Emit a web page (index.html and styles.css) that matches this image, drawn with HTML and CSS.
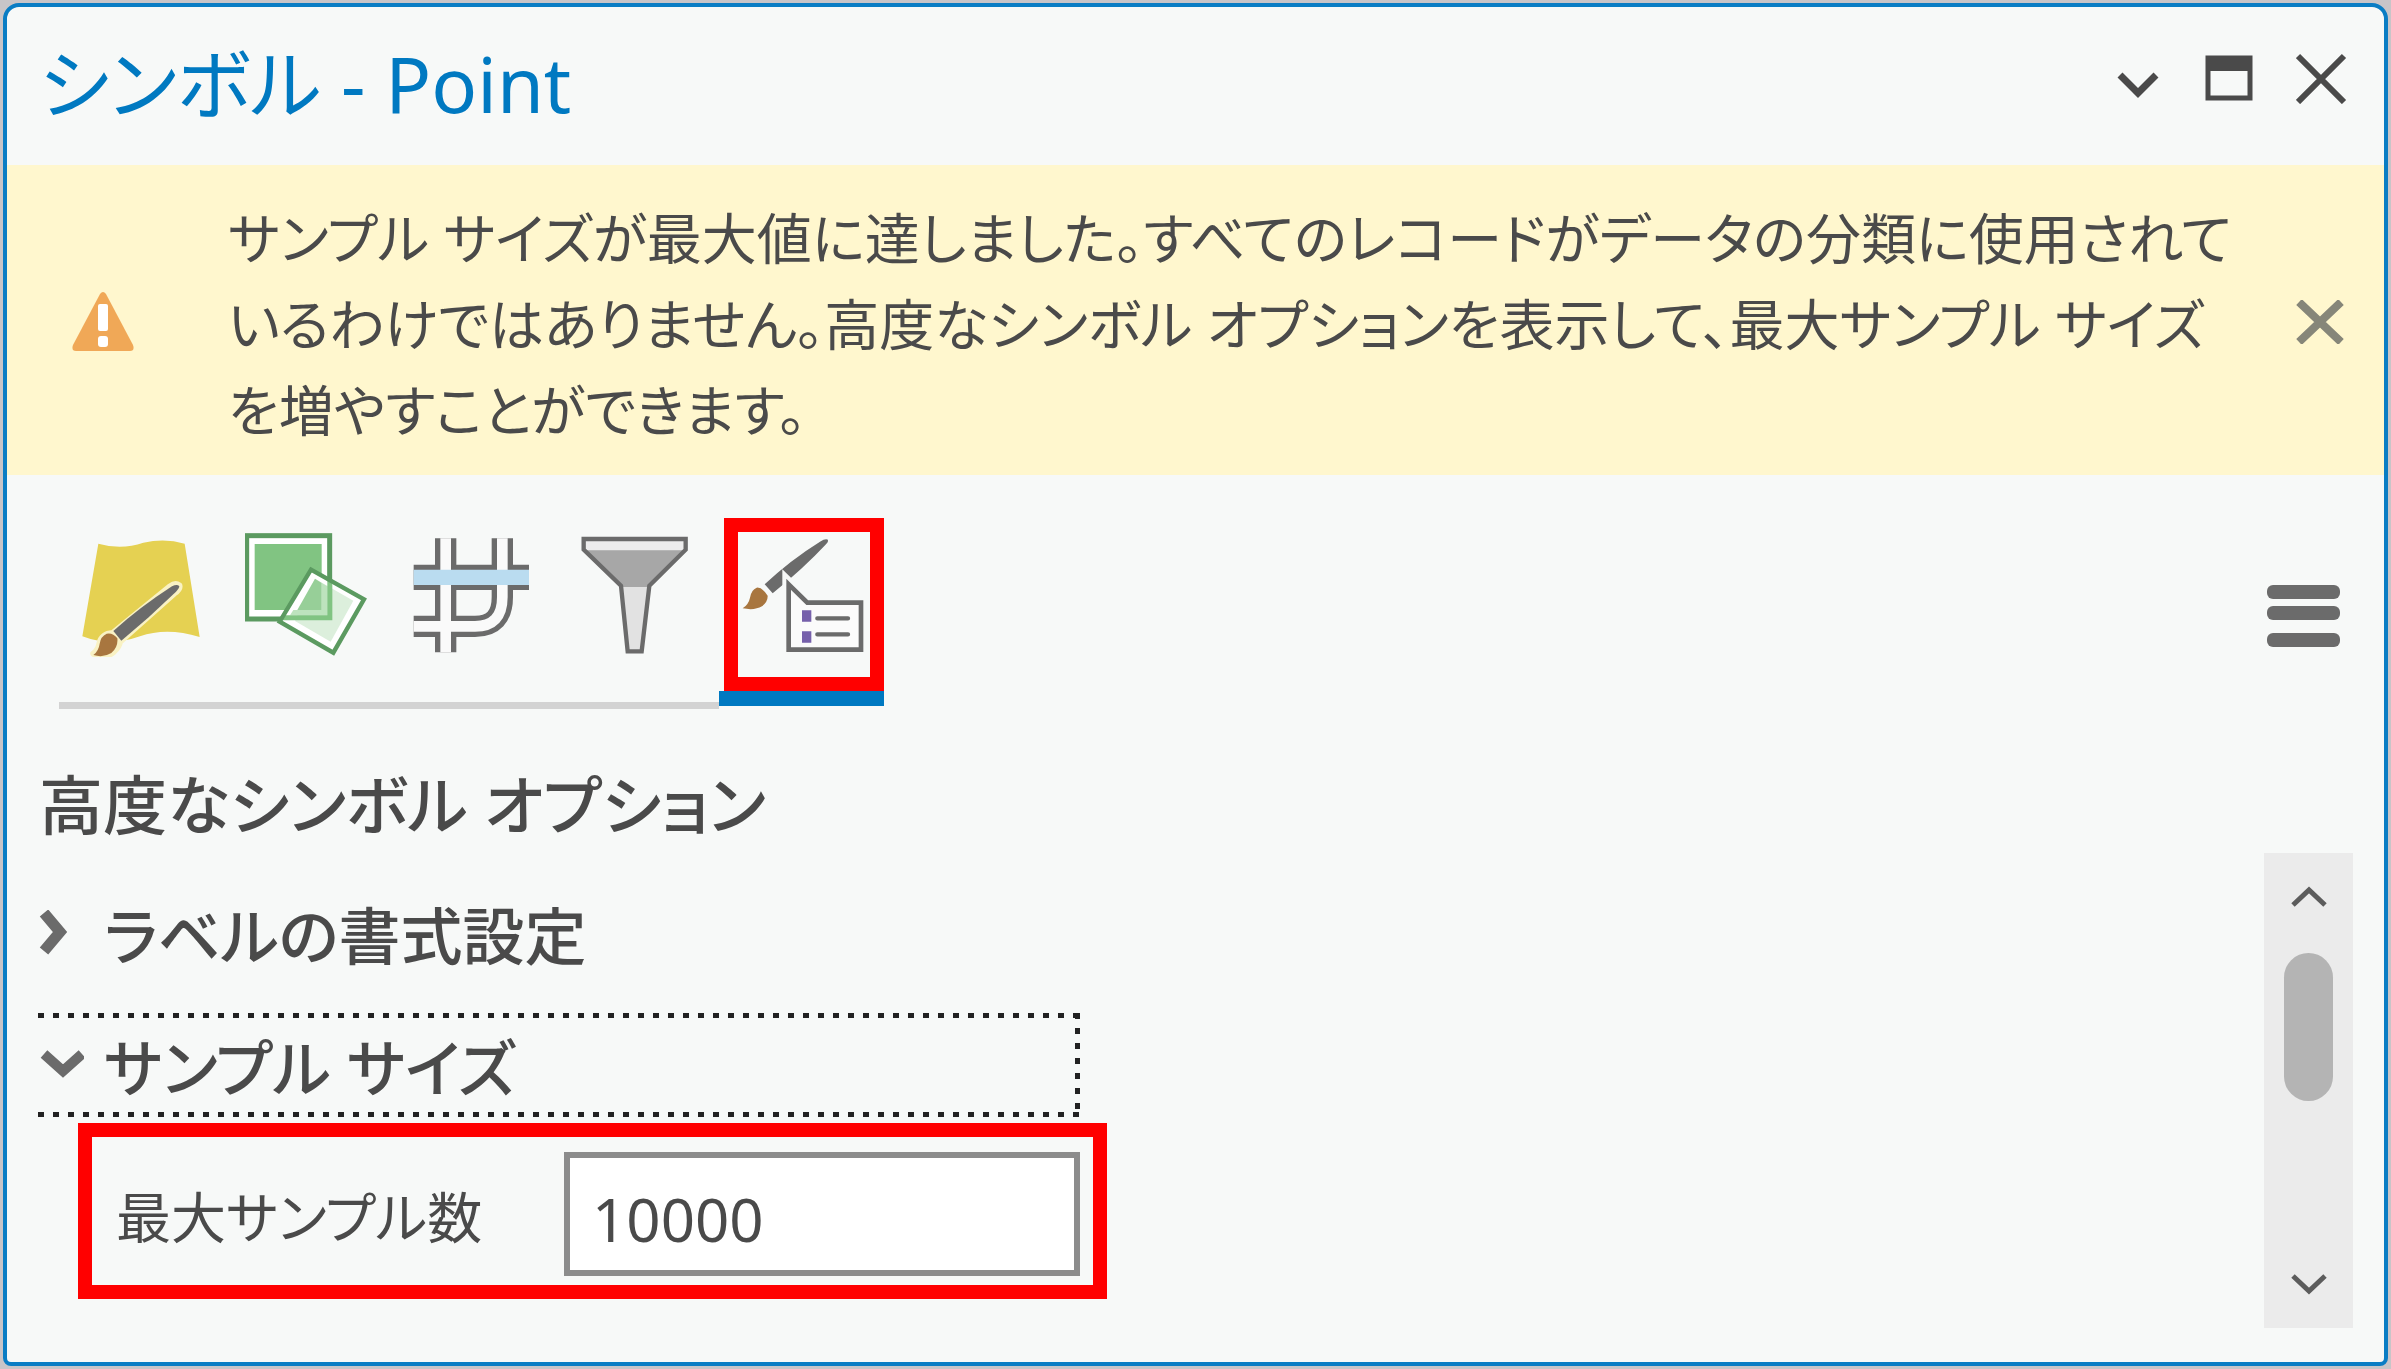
FILE: index.html
```
<!DOCTYPE html>
<html lang="ja">
<head>
  <meta charset="utf-8">
  <title>シンボル - Point</title>
  <link rel="stylesheet" href="styles.css">
</head>
<body>
  <div class="pane">
    <!-- Title bar -->
    <header class="title-bar">
      <h1 class="title">シンボル - Point</h1>
      <div class="window-buttons">
        <button class="icon-btn" aria-label="メニュー">
          <svg width="52" height="52" viewBox="0 0 52 52"><path d="M8 23 L26 41 L44 23" fill="none" stroke="#4a4a4a" stroke-width="7"/></svg>
        </button>
        <button class="icon-btn" aria-label="最大化">
          <svg width="52" height="52" viewBox="0 0 52 52"><rect x="4" y="6" width="42" height="40" fill="none" stroke="#4a4a4a" stroke-width="5"/><rect x="2" y="4" width="46" height="15" fill="#4a4a4a"/></svg>
        </button>
        <button class="icon-btn" aria-label="閉じる">
          <svg width="52" height="52" viewBox="0 0 52 52"><path d="M2 4 L48 50 M48 4 L2 50" fill="none" stroke="#4a4a4a" stroke-width="6"/></svg>
        </button>
      </div>
    </header>

    <!-- Warning -->
    <div class="banner">
      <svg class="banner-icon" width="62" height="60" viewBox="0 0 62 60">
        <path d="M28 2 Q31 -2 34 2 L61 53 Q63 59 58 59 L4 59 Q-1 59 1 53 Z" fill="#f0a857"/>
        <rect x="26" y="12" width="10" height="27" rx="2" fill="#fff"/>
        <rect x="26" y="44" width="10" height="11" rx="3" fill="#fff"/>
      </svg>
      <p class="banner-text">サンプル サイズが最大値に達しました。すべてのレコードがデータの分類に使用されて<br>いるわけではありません。高度なシンボル オプションを表示して、最大サンプル サイズ<br>を増やすことができます。</p>
      <button class="icon-btn" aria-label="メッセージを閉じる">
        <svg width="52" height="44" viewBox="0 0 52 44"><path d="M5 2 L47 42 M47 2 L5 42" fill="none" stroke="#868679" stroke-width="8"/></svg>
      </button>
    </div>

    <!-- Tabs -->
    <div class="toolbar">
      <div class="tabs" role="tablist">
        <button class="tab" role="tab" aria-label="プライマリ シンボル">
          <svg class="tab-icon" viewBox="90 98 372 372">
            <path d="M145 130 Q215 150 280 127 Q345 112 404 130 L449 410 Q350 380 270 408 Q180 440 97 408 Z" fill="#e5d152"/>
            <path d="M388 255 Q376 246 360 258 L188 398 Q155 400 148 430 Q145 448 130 460 Q160 478 190 456 Q208 440 210 424 L372 280 Q392 266 388 255 Z" fill="#f9f2c4" stroke="#f9f2c4" stroke-width="18" stroke-linejoin="round"/>
            <path d="M388 258 Q382 250 366 258 Q270 320 190 392 L214 421 Q300 350 378 274 Q388 264 388 258 Z" fill="#6b6b6b"/>
            <path d="M170 400 Q188 396 202 414 Q205 440 184 458 Q160 473 130 464 Q146 452 149 430 Q152 408 170 400 Z" fill="#a8763f"/>
          </svg>
        </button>
        <button class="tab" role="tab" aria-label="属性によるシンボル表示">
          <svg class="tab-icon" viewBox="585 98 372 372">
            <rect x="590" y="106" width="249" height="250" fill="#fff" stroke="#5b9a60" stroke-width="15"/>
            <rect x="614" y="131" width="201" height="198" fill="#81c482"/>
            <path d="M783 208 L942 297 L850 457 L689 364 Z" fill="#fff"/>
            <path d="M795 235 L910 301 L842 424 L735 362 Z" fill="#dcefdc"/>
            <path d="M795 235 L815 248 L815 329 L742 329 Z" fill="#97cf98"/>
            <path d="M815 248 L832 258 L832 345 L720 345 L730 329 L815 329 Z" fill="#bde3bd"/>
            <path d="M832 240 L847 248 L847 360 L692 360 L700 345 L832 345 Z" fill="#81c482"/>
            <path d="M783 208 L942 297 L850 457 L689 364 Z" fill="none" stroke="#5b9a60" stroke-width="13"/>
          </svg>
        </button>
        <button class="tab" role="tab" aria-label="シンボル レイヤーの描画">
          <svg class="tab-icon" viewBox="1080 98 372 372">
            <path d="M1091 378 H1275 Q1357 378 1357 290 V114 M1187 114 V456" fill="none" stroke="#6b6b6b" stroke-width="64"/>
            <path d="M1091 231 H1437" fill="none" stroke="#6b6b6b" stroke-width="76"/>
            <path d="M1091 378 H1275 Q1357 378 1357 290 V114 M1187 114 V456" fill="none" stroke="#fafafa" stroke-width="32"/>
            <path d="M1091 231 H1437" fill="none" stroke="#badcf0" stroke-width="46"/>
          </svg>
        </button>
        <button class="tab" role="tab" aria-label="表示フィルター">
          <svg class="tab-icon" viewBox="345 98 372 372">
            <path d="M371 116 H677 V148 L568 256 L545 453 H503 L483 256 L371 148 Z" fill="#e2e2e2"/>
            <path d="M371 116 H677 V150 H371 Z" fill="#ededed"/>
            <path d="M374 150 H674 L568 260 H483 Z" fill="#a7a7a7"/>
            <path d="M371 116 H677 V148 L568 256 L545 453 H503 L483 256 L371 148 Z" fill="none" stroke="#6b6b6b" stroke-width="13"/>
          </svg>
        </button>
        <button class="tab active" role="tab" aria-selected="true" aria-label="高度なシンボル オプション">
          <svg class="tab-icon" viewBox="840 98 372 372">
            <path d="M1104 118 Q1096 114 1080 124 Q990 180 914 252 L938 279 Q1030 205 1098 132 Q1106 124 1104 118 Z" fill="#6b6b6b"/>
            <path d="M890 262 Q906 260 923 286 Q924 304 906 318 Q884 331 848 324 Q866 312 870 292 Q874 268 890 262 Z" fill="#a8763f"/>
            <path d="M986 252 L1042 307 H1203 V448 H986 Z" fill="#fbfbfb" stroke="#f7f9f8" stroke-width="38"/>
            <path d="M986 252 L1042 307 H1203 V448 H986 Z" fill="#fbfbfb" stroke="#6b6b6b" stroke-width="14"/>
            <path d="M1026 330 h28 v34 h-28 z M1026 393 h28 v34 h-28 z" fill="#7660ab"/>
            <path d="M1072 354 H1164 M1072 402 H1164" stroke="#6b6b6b" stroke-width="13" stroke-linecap="round"/>
          </svg>
          <span class="highlight"></span>
        </button>
      </div>
      <button class="icon-btn menu-btn" aria-label="オプション">
        <svg width="73" height="62" viewBox="0 0 73 62" fill="#6b6b6b">
          <rect width="73" height="14" rx="6"/>
          <rect y="21" width="73" height="14" rx="6"/>
          <rect y="48" width="73" height="14" rx="6"/>
        </svg>
      </button>
    </div>

    <h2 class="heading">高度なシンボル オプション</h2>

    <div class="content">
      <div class="options">
        <button class="expander">
          <svg class="chevron" viewBox="0 0 46 46"><path d="M6 3 L22 22 L6 41" fill="none" stroke="#6b6b6b" stroke-width="11"/></svg>
          ラベルの書式設定
        </button>
        <button class="expander focused" aria-expanded="true">
          <svg class="chevron" viewBox="0 0 46 46"><path d="M6 12 L25 29 L44 12" fill="none" stroke="#6b6b6b" stroke-width="10"/></svg>
          サンプル サイズ
        </button>
        <div class="field">
          <label for="maxSample">最大サンプル数</label>
          <input type="text" id="maxSample" class="field-input" value="10000">
        </div>
      </div>

      <div class="scrollbar">
        <button class="scroll-btn" aria-label="上へ">
          <svg width="36" height="22" viewBox="0 0 36 22"><path d="M2 19 L18 4 L34 19" fill="none" stroke="#5c5c5c" stroke-width="5"/></svg>
        </button>
        <div class="scroll-thumb"></div>
        <button class="scroll-btn scroll-down" aria-label="下へ">
          <svg width="36" height="22" viewBox="0 0 36 22"><path d="M2 3 L18 18 L34 3" fill="none" stroke="#5c5c5c" stroke-width="5"/></svg>
        </button>
      </div>
    </div>
  </div>
</body>
</html>
```
FILE: styles.css
```
* {
  box-sizing: border-box;
}
body {
  margin: 0;
  padding: 3px;
  background: #c8c5c8;
  color: #4a4a4a;
  font-family: 'Noto Sans', 'Noto Sans CJK JP', sans-serif;
  font-feature-settings: "palt";
  font-size: 55px;
}
button {
  padding: 0;
  border: none;
  background: none;
  color: inherit;
  font: inherit;
  cursor: pointer;
}
svg {
  display: block;
  flex-shrink: 0;
}
.pane {
  display: flex;
  flex-direction: column;
  min-height: calc(100vh - 6px);
  border: 4px solid #0a7dc4;
  border-radius: 16px 16px 8px 8px;
  background: #f7f9f8;
}

/* Title bar */
.title-bar {
  display: flex;
  align-items: center;
  justify-content: space-between;
  height: 158px;
  padding: 0 36px 16px 32px;
}
.title {
  margin: 0;
  padding-top: 12px;
  color: #0079c1;
  font-size: 76px;
  font-weight: 400;
  line-height: 112px;
}
.window-buttons {
  display: flex;
  gap: 40px;
}

/* Warning banner */
.banner {
  display: flex;
  align-items: center;
  height: 310px;
  padding: 4px 38px 0 65px;
  background: #fff7ce;
}
.banner-text {
  flex: 1;
  margin: 0 0 0 94px;
  padding-top: 4px;
  line-height: 86px;
  white-space: nowrap;
}

/* Tabs */
.toolbar {
  display: flex;
  justify-content: space-between;
  padding: 43px 44px 0 52px;
}
.tabs {
  display: flex;
}
.tab {
  position: relative;
  display: flex;
  justify-content: center;
  width: 165px;
  height: 191px;
  padding-top: 15px;
  border-bottom: 7px solid #d3d3d3;
}
.tab-icon {
  width: 124px;
  height: 124px;
}
.tab.active {
  border-color: transparent;
}
.tab.active::after {
  content: "";
  position: absolute;
  left: 0;
  right: 0;
  bottom: -4px;
  height: 15px;
  background: #0079c1;
}
.highlight {
  position: absolute;
  top: 0;
  left: 5px;
  right: 0;
  height: 173px;
  border: 14px solid #f00;
}
.menu-btn {
  display: flex;
  margin-top: 67px;
}

/* Options */
.heading {
  margin: 56px 0 8px 32px;
  font-size: 64px;
  font-weight: 500;
  line-height: 80px;
}
.content {
  display: flex;
  flex: 1;
  justify-content: space-between;
  padding: 0 31px 34px;
}
.options {
  width: 1100px;
}
.expander {
  display: flex;
  align-items: center;
  gap: 20px;
  width: 1042px;
  height: 104px;
  margin: 28px 0;
  font-size: 62px;
  font-weight: 500;
  text-align: left;
}
.chevron {
  width: 46px;
  height: 46px;
}
.expander.focused {
  margin: 0 0 6px;
  background:
    repeating-linear-gradient(90deg, #222 0 6px, transparent 6px 15px) top / 100% 5px no-repeat,
    repeating-linear-gradient(90deg, #222 0 6px, transparent 6px 15px) bottom / 100% 5px no-repeat,
    repeating-linear-gradient(#222 0 6px, transparent 6px 15px) right / 5px 100% no-repeat;
}
.field {
  display: flex;
  align-items: center;
  justify-content: space-between;
  width: 1029px;
  height: 176px;
  margin-left: 40px;
  padding: 6px 13px 0 24px;
  border: 14px solid #f00;
}
.field-input {
  width: 516px;
  height: 124px;
  padding: 10px 22px 0;
  border: 6px solid #8c8c8c;
  background: #fff;
  color: inherit;
  font: inherit;
  font-size: 60px;
}

/* Scrollbar */
.scrollbar {
  display: flex;
  flex-direction: column;
  align-items: center;
  width: 89px;
  background: #ebebeb;
}
.scroll-btn {
  display: flex;
  align-items: center;
  justify-content: center;
  width: 89px;
  height: 88px;
}
.scroll-thumb {
  width: 49px;
  height: 148px;
  margin-top: 12px;
  border-radius: 25px;
  background: #b4b4b4;
}
.scroll-down {
  margin-top: auto;
}
```
